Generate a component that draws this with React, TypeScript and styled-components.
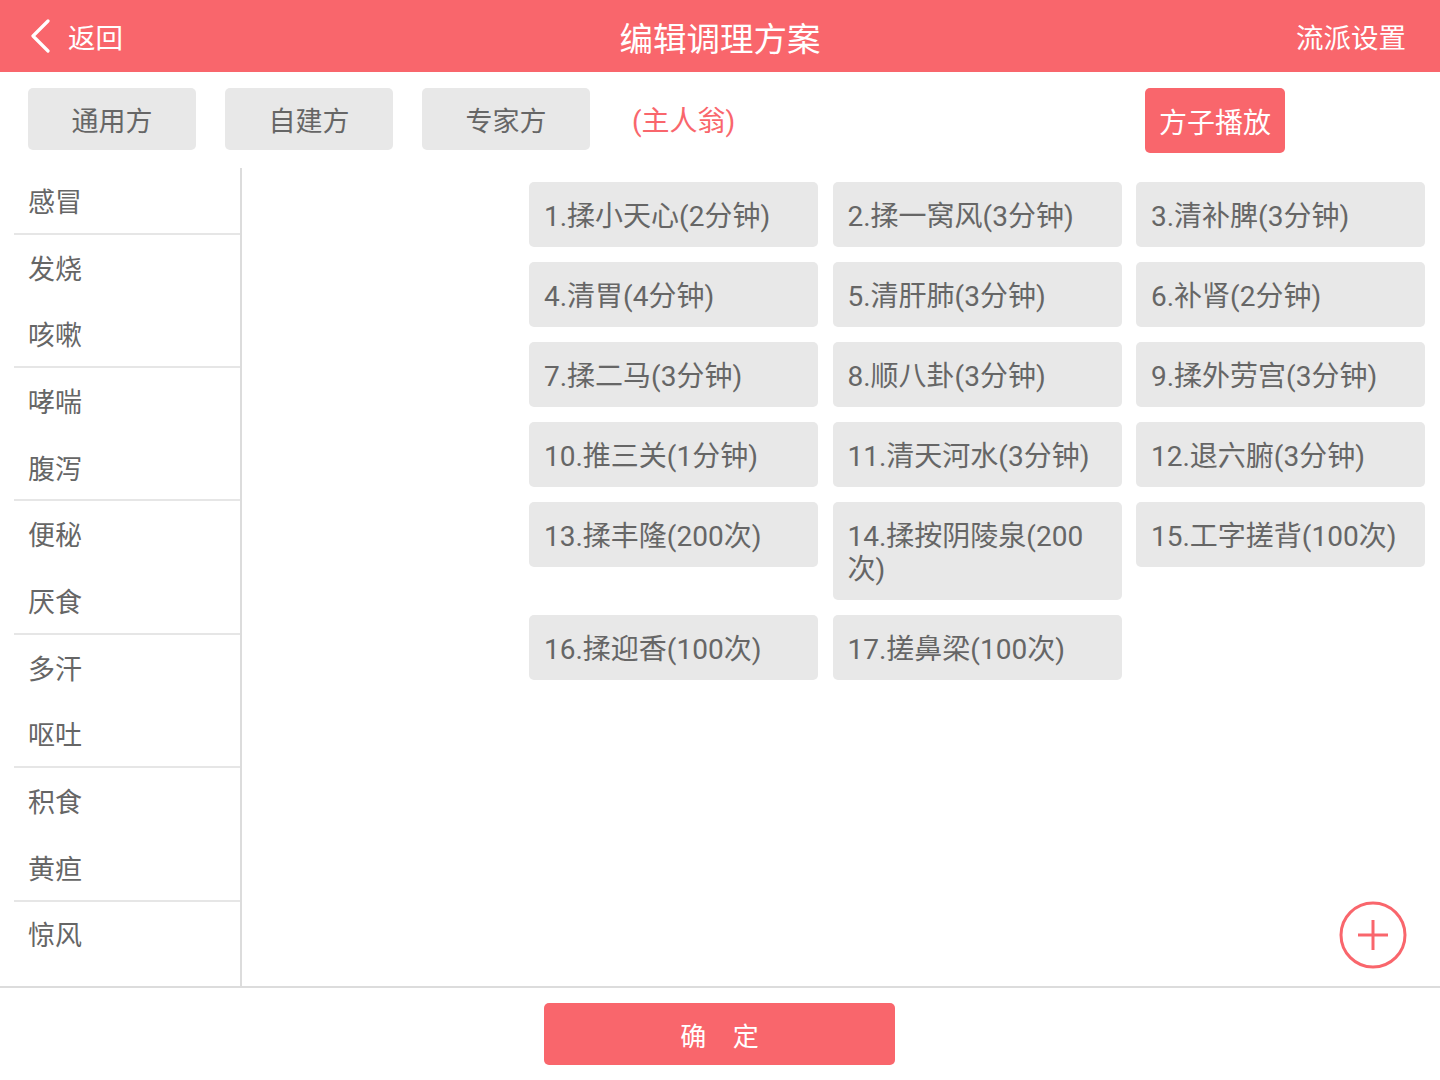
import React from "react";
import styled, { createGlobalStyle } from "styled-components";

const RED = "#f9666c";

const Global = createGlobalStyle`
  html, body { margin: 0; padding: 0; background: #fff; }
  body { font-family: Roboto, "Noto Sans CJK SC", sans-serif; }
  * { box-sizing: border-box; }
`;

const Page = styled.div`
  width: 1440px;
  height: 1080px;
  display: flex;
  flex-direction: column;
  overflow: hidden;
`;

const Header = styled.header`
  height: 72px;
  background: ${RED};
  display: flex;
  align-items: center;
  justify-content: space-between;
  padding: 0 34px 0 28px;
  position: relative;
  color: #fff;
  flex-shrink: 0;
`;

const Back = styled.div`
  display: flex;
  align-items: center;
  gap: 16px;
  font-size: 27.5px;
`;

const Title = styled.div`
  position: absolute;
  left: 50%;
  transform: translateX(-50%);
  font-size: 33.5px;
`;

const HeaderRight = styled.div`
  font-size: 27.5px;
`;

const TabRow = styled.div`
  height: 96px;
  display: flex;
  align-items: flex-start;
  padding: 16px 28px 0;
  flex-shrink: 0;
`;

const Tab = styled.div`
  width: 168px;
  height: 62px;
  border-radius: 5px;
  background: #e8e8e8;
  color: #666;
  font-size: 27px;
  display: flex;
  align-items: center;
  justify-content: center;
  margin-right: 29px;
`;

const Owner = styled.div`
  color: ${RED};
  font-size: 28px;
  height: 62px;
  display: flex;
  align-items: center;
  margin-left: 13px;
`;

const PlayButton = styled.div`
  margin-left: auto;
  margin-right: 127px;
  width: 140px;
  height: 65px;
  border-radius: 5px;
  background: ${RED};
  color: #fff;
  font-size: 28px;
  display: flex;
  align-items: center;
  justify-content: center;
`;

const Body = styled.div`
  flex: 1;
  display: flex;
  border-bottom: 2px solid #dcdcdc;
  min-height: 0;
`;

const Sidebar = styled.div`
  width: 242px;
  border-right: 2px solid #dcdcdc;
  display: flex;
  flex-direction: column;
  padding-left: 14px;
  flex-shrink: 0;
`;

const SideItem = styled.div<{ $divider: boolean }>`
  height: 66.7px;
  display: flex;
  align-items: center;
  padding-left: 14px;
  font-size: 27px;
  color: #666;
  border-bottom: ${(p) => (p.$divider ? "2px solid #e6e6e6" : "2px solid transparent")};
`;

const Content = styled.div`
  flex: 1;
  position: relative;
  display: flex;
  justify-content: flex-end;
  align-items: flex-start;
  padding: 14px 15px 0 0;
`;

const Grid = styled.div`
  display: grid;
  grid-template-columns: repeat(3, 289px);
  column-gap: 14.5px;
  row-gap: 15px;
  align-items: start;
`;

const Cell = styled.div`
  min-height: 65px;
  border-radius: 5px;
  background: #e8e8e8;
  color: #666;
  font-size: 28px;
  line-height: 33px;
  padding: 18px 15px 14px;
  word-break: break-all;
`;

const AddButton = styled.div`
  position: absolute;
  right: 32px;
  bottom: 16px;
  width: 70px;
  height: 70px;
`;

const Footer = styled.div`
  height: 92px;
  display: flex;
  justify-content: center;
  padding-top: 15px;
  flex-shrink: 0;
`;

const Confirm = styled.div`
  width: 351px;
  height: 62px;
  border-radius: 5px;
  background: ${RED};
  color: #fff;
  font-size: 26px;
  display: flex;
  align-items: center;
  justify-content: center;
  margin-left: -1px;
`;

const sideItems: { label: string; divider: boolean }[] = [
  { label: "感冒", divider: true },
  { label: "发烧", divider: false },
  { label: "咳嗽", divider: true },
  { label: "哮喘", divider: false },
  { label: "腹泻", divider: true },
  { label: "便秘", divider: false },
  { label: "厌食", divider: true },
  { label: "多汗", divider: false },
  { label: "呕吐", divider: true },
  { label: "积食", divider: false },
  { label: "黄疸", divider: true },
  { label: "惊风", divider: false },
];

const cells = [
  "1.揉小天心(2分钟)",
  "2.揉一窝风(3分钟)",
  "3.清补脾(3分钟)",
  "4.清胃(4分钟)",
  "5.清肝肺(3分钟)",
  "6.补肾(2分钟)",
  "7.揉二马(3分钟)",
  "8.顺八卦(3分钟)",
  "9.揉外劳宫(3分钟)",
  "10.推三关(1分钟)",
  "11.清天河水(3分钟)",
  "12.退六腑(3分钟)",
  "13.揉丰隆(200次)",
  "14.揉按阴陵泉(200次)",
  "15.工字搓背(100次)",
  "16.揉迎香(100次)",
  "17.搓鼻梁(100次)",
];

export default function App() {
  return (
    <Page>
      <Global />
      <Header>
        <Back>
          <svg width="24" height="34" viewBox="0 0 24 34">
            <polyline points="20,2 5,17 20,32" fill="none" stroke="#fff" strokeWidth="3.2" strokeLinecap="round" strokeLinejoin="round" />
          </svg>
          <span>返回</span>
        </Back>
        <Title>编辑调理方案</Title>
        <HeaderRight>流派设置</HeaderRight>
      </Header>
      <TabRow>
        <Tab>通用方</Tab>
        <Tab>自建方</Tab>
        <Tab>专家方</Tab>
        <Owner>(主人翁)</Owner>
        <PlayButton>方子播放</PlayButton>
      </TabRow>
      <Body>
        <Sidebar>
          {sideItems.map((s) => (
            <SideItem key={s.label} $divider={s.divider}>
              {s.label}
            </SideItem>
          ))}
        </Sidebar>
        <Content>
          <Grid>
            {cells.map((c) => (
              <Cell key={c}>{c}</Cell>
            ))}
          </Grid>
          <AddButton>
            <svg width="70" height="70" viewBox="0 0 70 70">
              <circle cx="35" cy="35" r="32" fill="none" stroke={RED} strokeWidth="3" />
              <line x1="20" y1="35" x2="50" y2="35" stroke={RED} strokeWidth="3" />
              <line x1="35" y1="20" x2="35" y2="50" stroke={RED} strokeWidth="3" />
            </svg>
          </AddButton>
        </Content>
      </Body>
      <Footer>
        <Confirm>确&emsp;定</Confirm>
      </Footer>
    </Page>
  );
}
